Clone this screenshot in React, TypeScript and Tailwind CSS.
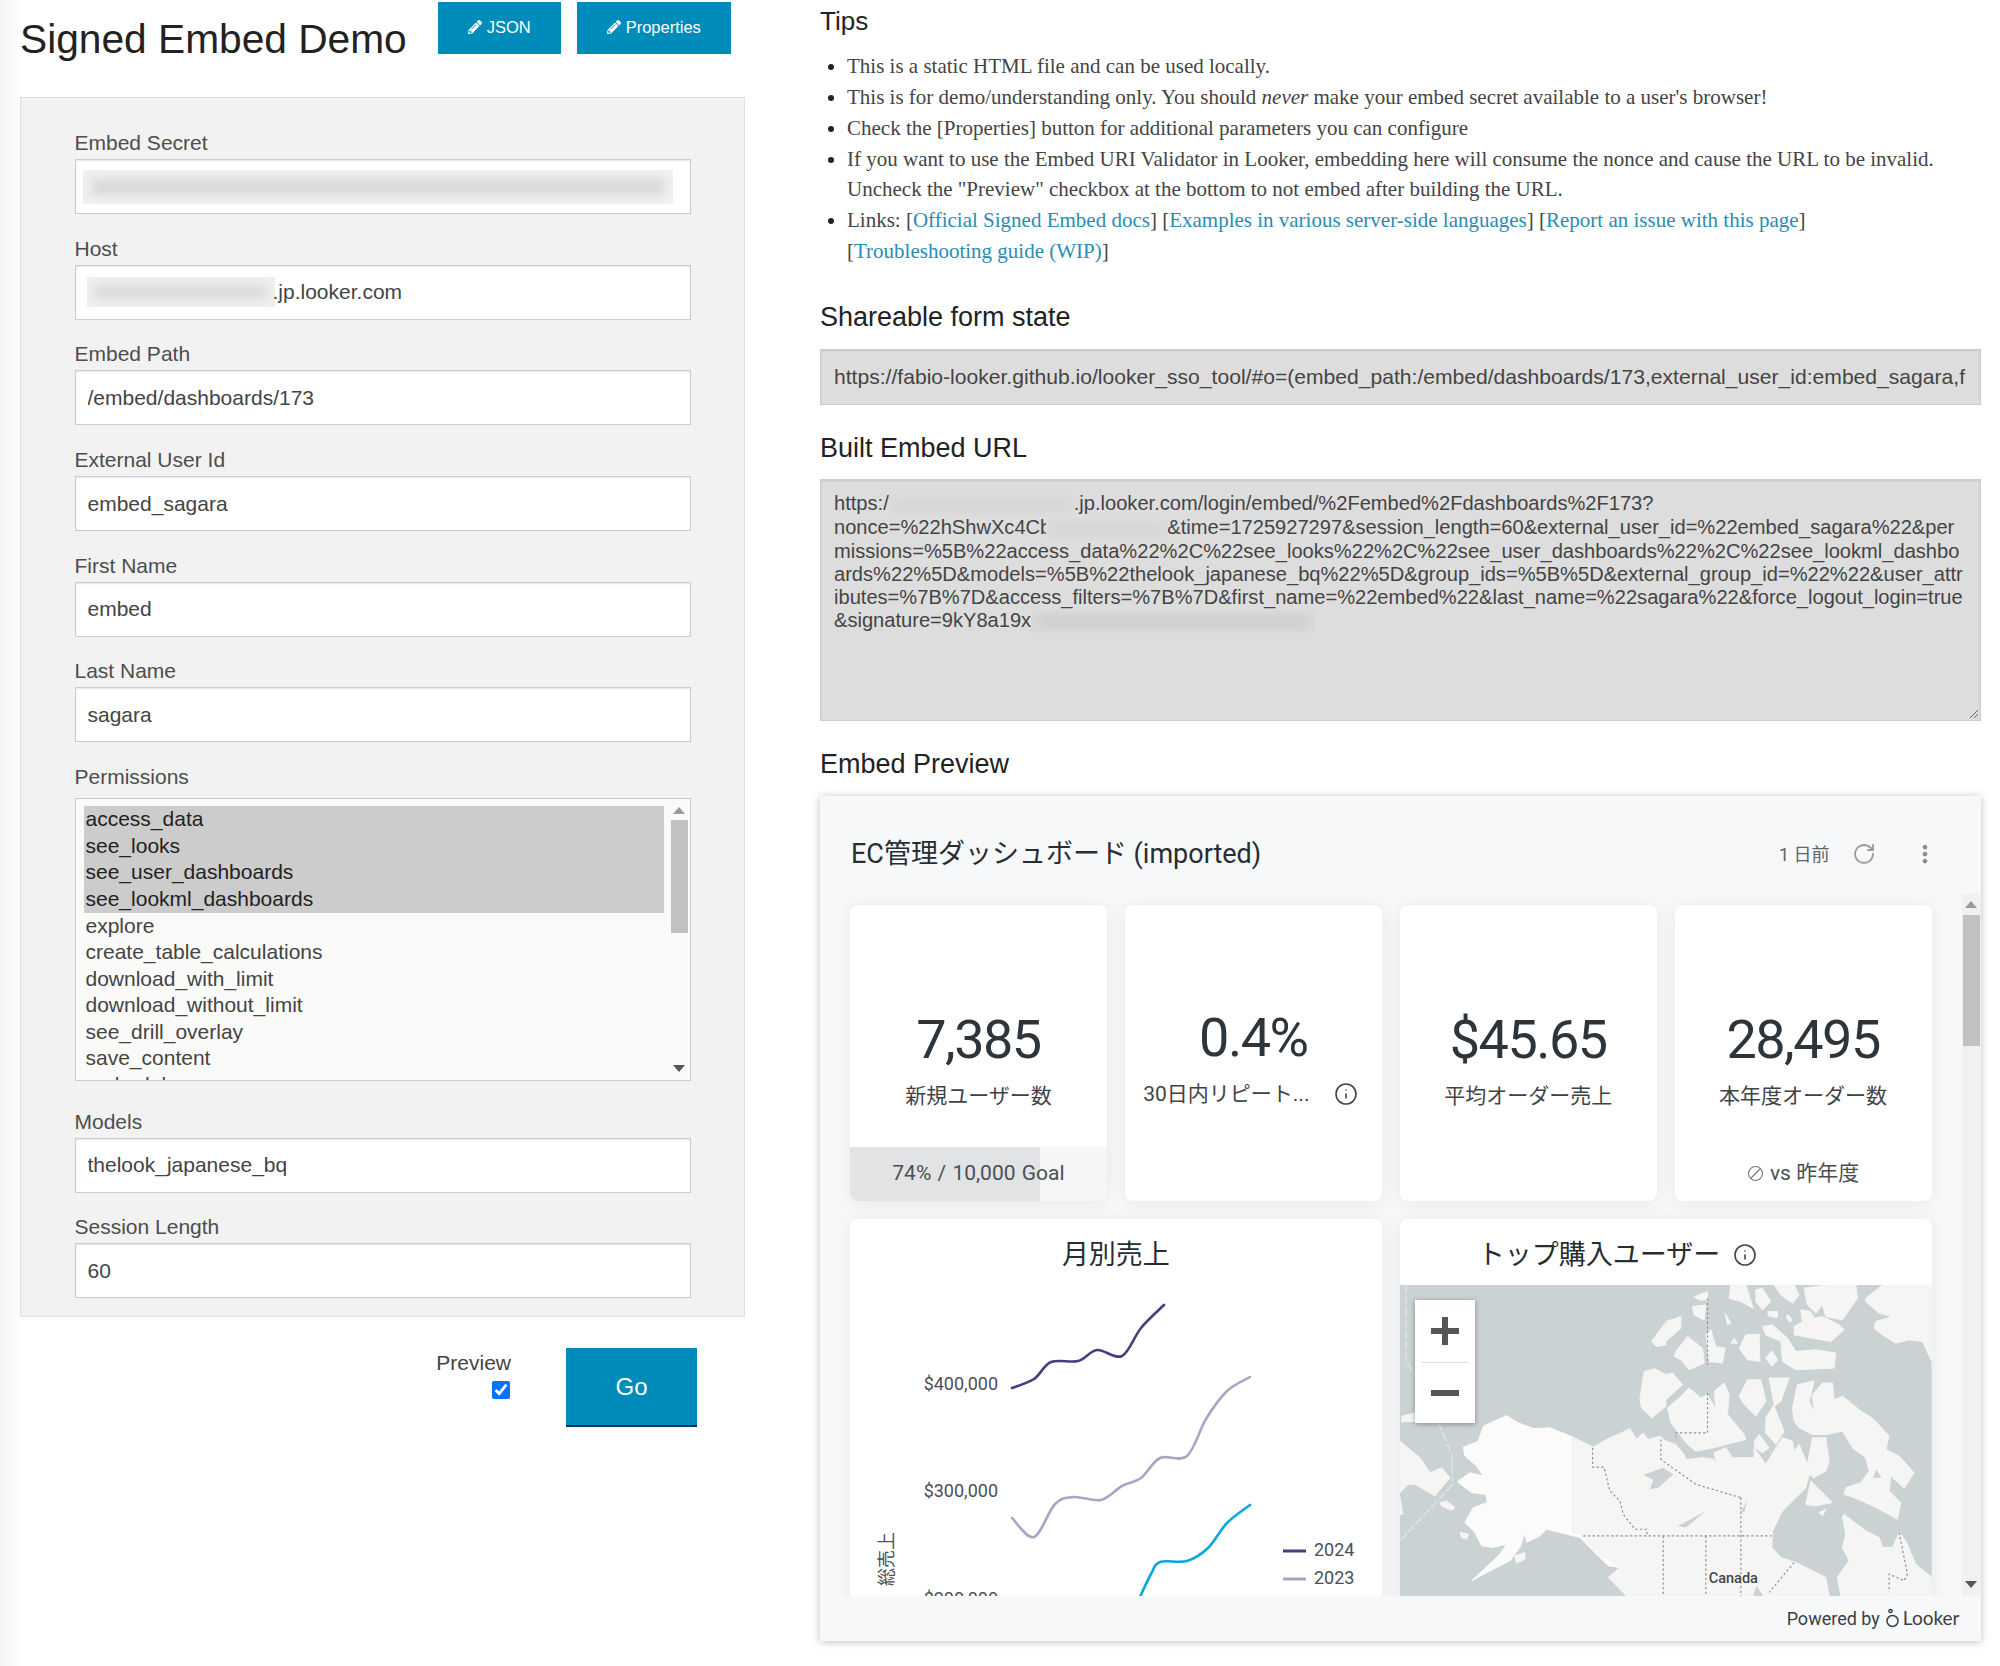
import React from "react";
import { FaPencilAlt } from "react-icons/fa";
import { Info, RotateCw } from "lucide-react";
import { MdMoreVert } from "react-icons/md";

const PERMISSIONS = [
  "access_data",
  "see_looks",
  "see_user_dashboards",
  "see_lookml_dashboards",
  "explore",
  "create_table_calculations",
  "download_with_limit",
  "download_without_limit",
  "see_drill_overlay",
  "save_content",
  "embed_browse_spaces",
];

const LINE_2024: number[][] = [[162, 169], [184, 160], [201, 143], [228, 142], [247, 131], [272, 137], [291, 109], [314, 86]];
const LINE_2023: number[][] = [[162, 299], [184, 318], [205, 285], [224, 278], [251, 281], [272, 267], [291, 259], [310, 239], [337, 237], [356, 200], [377, 172], [400, 158]];
const LINE_2022: number[][] = [[290, 378], [301, 355], [310, 343], [337, 342], [358, 329], [377, 304], [400, 286]];

// catmull-rom through the points, good enough for looker's smoothed lines
const smooth = (pts: number[][]) => {
  let d = `M${pts[0][0]} ${pts[0][1]}`;
  for (let i = 0; i < pts.length - 1; i++) {
    const p0 = pts[Math.max(i - 1, 0)];
    const p1 = pts[i];
    const p2 = pts[i + 1];
    const p3 = pts[Math.min(i + 2, pts.length - 1)];
    const c1x = p1[0] + (p2[0] - p0[0]) / 6;
    const c1y = p1[1] + (p2[1] - p0[1]) / 6;
    const c2x = p2[0] - (p3[0] - p1[0]) / 6;
    const c2y = p2[1] - (p3[1] - p1[1]) / 6;
    d += ` C${c1x} ${c1y} ${c2x} ${c2y} ${p2[0]} ${p2[1]}`;
  }
  return d;
};

const inputBox =
  "h-[55px] w-full border border-[#cccccc] bg-white px-[12px] text-[21px] text-[#444444] shadow-[inset_0_1px_2px_rgba(0,0,0,0.1)] flex items-center outline-none";

const Field: React.FC<{ label: string; value?: string; children?: React.ReactNode }> = ({ label, value, children }) => (
  <div className="mb-[24.7px]">
    <label className="block h-[26px] text-[21px] leading-[20px] text-[#4d4d4d]">{label}</label>
    {children ? (
      <div className={inputBox}>{children}</div>
    ) : (
      <input readOnly value={value} className={inputBox} />
    )}
  </div>
);

const Blur: React.FC<{ w: string; h: string; core: string; bar: string }> = ({ w, h, core, bar }) => (
  <span className={`inline-block overflow-hidden align-middle ${w} ${h} ${core} p-[7px]`}>
    <span className={`block h-full w-full blur-[5px] ${bar}`} />
  </span>
);

const Arrow: React.FC<{ up?: boolean; color?: string }> = ({ up, color = "#555555" }) => (
  <svg width="12" height="7" viewBox="0 0 12 7" className="block">
    <polygon points={up ? "6,0 12,7 0,7" : "0,0 12,0 6,7"} fill={color} />
  </svg>
);

const Tile: React.FC<{ value: string; label: React.ReactNode; foot?: React.ReactNode; valueClass?: string }> = ({
  value,
  label,
  foot,
  valueClass = "mt-[103px]",
}) => (
  <div className="relative flex h-[296px] flex-col items-center overflow-hidden rounded-[8px] bg-white shadow-[0_2px_18px_rgba(0,0,0,0.07)]">
    <div className={`${valueClass} h-[64px] text-[54px] font-normal leading-[64px] tracking-[-1.5px] text-[#2d343a]`}>{value}</div>
    <div className="mt-[10px] flex h-[28px] items-center text-[21px] text-[#3f4347]">{label}</div>
    {foot}
  </div>
);

const MapLand = () => (
  <svg viewBox="0 0 1596 936" className="block h-full w-full blur-[0.6px]" preserveAspectRatio="none">
    <rect width="1596" height="936" fill="#cad2d3" />
    <g fill="#f5f5f4" stroke="#f5f5f4" strokeWidth="3" strokeLinejoin="round">
      {/* russia side */}
      <polygon points="0,470 60,520 90,565 125,550 150,580 105,635 45,600 25,600 0,625" />
      <polygon points="0,640 8,690 0,690" />
      <polygon points="5,395 45,385 45,410 5,412" />
      <polygon points="120,655 140,650 165,670 155,678 125,665" />
      {/* mainland */}
      <polygon points="520,458 580,488 620,465 665,445 690,432 710,465 730,445 745,465 780,455 798,470 828,480 853,510 858,525 908,520 943,525 953,548 943,505 978,490 998,520 1063,520 1063,490 1098,540 1128,490 1148,460 1178,470 1183,500 1198,480 1223,540 1238,460 1278,460 1288,530 1278,560 1243,580 1228,570 1218,610 1178,650 1148,680 1118,740 1116,790 1143,820 1188,835 1238,860 1278,880 1288,936 680,936 625,880 660,850 590,810 550,760 520,745" />
      {/* quebec */}
      <polygon points="1323,936 1313,880 1348,830 1328,790 1338,750 1328,700 1333,690 1398,740 1438,760 1448,790 1478,790 1498,745 1518,770 1548,840 1596,880 1596,936" />
      {/* baffin */}
      <polygon points="1183,410 1178,370 1193,300 1243,288 1228,350 1243,385 1238,330 1268,295 1298,295 1303,345 1328,335 1378,375 1423,405 1468,455 1458,495 1498,515 1543,565 1513,612 1473,575 1468,620 1503,655 1493,705 1448,680 1408,660 1363,640 1333,630 1338,610 1383,595 1408,560 1398,520 1358,490 1328,440 1278,450 1238,450 1198,430" />
      <polygon points="803,370 848,330 868,310 903,340 923,330 948,375 943,320 973,295 988,330 983,390 1033,450 1038,465 978,480 943,490 888,500 863,480 813,415" />
      <polygon points="1018,335 1043,285 1083,285 1098,350 1068,395 1033,360" />
      <polygon points="1108,280 1168,280 1143,350 1123,365 1153,440 1128,480 1098,445 1098,400 1123,360" />
      <polygon points="1063,470 1078,450 1108,490 1088,505 1066,490" />
      <polygon points="828,200 863,155 908,190 913,235 868,255 843,225 823,215" />
      <polygon points="918,150 933,135 948,185 976,190 968,235 928,230" />
      <polygon points="1018,190 1038,150 1078,148 1080,230 1043,225" />
      <polygon points="1098,220 1116,198 1133,225 1116,245" />
      <polygon points="1088,125 1118,120 1163,160 1188,200 1248,195 1308,205 1303,250 1188,255 1148,230 1143,170 1098,150" />
      <polygon points="1183,125 1208,110 1203,75 1233,80 1243,100 1268,95 1318,120 1333,135 1293,170 1183,150" />
      <polygon points="1213,10 1278,0 1368,0 1373,40 1328,105 1278,95 1268,60 1248,85 1223,60" />
      <polygon points="1123,0 1183,0 1198,30 1178,55 1143,30" />
      <polygon points="1068,15 1088,10 1113,50 1088,75 1068,50" />
      <polygon points="993,0 1038,0 1060,70 1023,50 988,40" />
      <polygon points="883,35 923,20 923,45 898,45" />
      <polygon points="878,65 918,60 913,105 883,90" />
      <polygon points="1103,80 1133,80 1133,98 1108,95" />
      <polygon points="1163,88 1178,105 1170,112 1160,98" />
      <polygon points="976,85 993,115 983,120" />
      <polygon points="798,110 843,95 843,130 798,170" />
      <polygon points="1003,160 1013,175 993,175" />
      <polygon points="1398,40 1448,0 1596,0 1596,230 1568,170 1528,165 1488,175 1448,150 1423,130 1428,110 1478,95 1438,85 1398,50" />
      <polygon points="1218,660 1233,590 1298,655 1268,660 1243,665" />
      <polygon points="1258,685 1278,675 1268,695" />
      {/* banks */}
      <polygon points="733,260 765,252 798,270 818,265 848,300 798,345 798,365 755,400 725,370 720,345" />
      <polygon points="755,170 795,115 798,180 770,185" />
      <polygon points="345,815 375,805 375,825 350,838" />
      <polygon points="180,745 205,750 200,765 185,760" />
    </g>
    {/* alaska */}
    <polygon
      fill="#fbfbfa"
      stroke="#fbfbfa"
      strokeWidth="3"
      strokeLinejoin="round"
      points="190,488 235,470 250,425 320,393 355,415 400,432 450,430 520,458 520,745 550,760 590,810 660,850 625,845 570,790 540,760 440,735 420,755 380,775 375,745 360,790 330,830 290,850 215,890 300,810 320,780 280,790 245,785 225,745 195,715 220,670 262,655 258,630 215,625 172,592 210,565 250,575 230,545 195,515"
    />
    <g fill="#cad2d3">
      <ellipse cx="1356" cy="525" rx="14" ry="17" />
      <polygon points="1420,580 1430,555 1445,580" />
      <polygon points="730,572 790,550 820,570 775,610 750,615 760,585" />
      <polygon points="833,725 863,710 918,680 888,705 858,730" />
      <polygon points="1023,680 1043,650 1033,685" />
      <polygon points="1060,936 1070,905 1090,936" />
    </g>
    <path d="M520 458V745" stroke="#e6e7e6" strokeWidth="3" fill="none" />
    <g fill="none" stroke="#8d8f8f" strokeWidth="3.5" strokeDasharray="7 7">
      <path d="M578 490V548H612L630 620L660 650L670 690L705 735H740L742 755" />
      <path d="M550 755H1116" />
      <path d="M790 755V936M918 755V936M1023 640V936" />
      <path d="M783 465V525L888 600L1023 640" />
      <path d="M923 40V240M923 325V445H828V458" />
      <path d="M1183 835L1108 925" />
      <path d="M1498 745L1523 870L1513 890L1468 870V925" />
    </g>
    <g fill="none" stroke="#e2e8e8" strokeWidth="4" strokeDasharray="26 8">
      <path d="M18 0V225L42 270" />
      <path d="M115 415L155 510L158 590" />
      <path d="M158 600L0 770" />
    </g>
  </svg>
);

export default function App() {
  return (
    <div className="flex h-[1666px] w-[2000px] overflow-hidden bg-[linear-gradient(to_right,#f3f3f3,#ffffff_22px)] font-['Liberation_Sans',Arial,sans-serif] text-[#222222]">
      {/* left column */}
      <div className="ml-[20px] w-[725px] shrink-0">
        <div className="flex h-[97px] items-start">
          <h1 className="mt-[15px] text-[40.7px] leading-[48px] text-[#222222]">Signed Embed Demo</h1>
          <button className="ml-[31px] mt-[2px] flex h-[52px] w-[123px] items-center justify-center gap-[5px] bg-[#008cba] pb-[2px] text-[16.5px] text-white">
            <FaPencilAlt size={14} /> JSON
          </button>
          <button className="ml-[16px] mt-[2px] flex h-[52px] w-[154px] items-center justify-center gap-[5px] bg-[#008cba] pb-[2px] text-[16.5px] text-white">
            <FaPencilAlt size={14} /> Properties
          </button>
        </div>

        <div className="h-[1220px] border border-[#dfdfdf] bg-[#f2f2f2] pl-[53.5px] pr-[53px] pt-[35px]">
          <Field label="Embed Secret">
            <div className="-ml-[5px] -mr-[5px] h-[34px] w-full bg-[#f1f1f1] p-[8px]">
              <div className="h-full w-full bg-[#d9dad9] blur-[5px]" />
            </div>
          </Field>
          <Field label="Host">
            <div className="-ml-[1px] h-[30px] w-[188px] shrink-0 bg-[#f0f0f0] p-[8px]">
              <div className="h-full w-full bg-[#dadada] blur-[5px]" />
            </div>
            <span className="-ml-[2px]">.jp.looker.com</span>
          </Field>
          <Field label="Embed Path" value="/embed/dashboards/173" />
          <Field label="External User Id" value="embed_sagara" />
          <Field label="First Name" value="embed" />
          <Field label="Last Name" value="sagara" />

          <div className="mb-[30.5px]">
            <label className="block h-[31px] text-[21px] leading-[20px] text-[#4d4d4d]">Permissions</label>
            <div className="relative flex h-[283px] w-full overflow-hidden border border-[#cccccc] bg-[#fafaf9] pl-[8px] pt-[7px] text-[21px] leading-[26.6px] text-[#444444]">
              <ul className="w-[580px]">
                {PERMISSIONS.map((p, i) => (
                  <li key={p} className={i < 4 ? "bg-[#cccccc] pl-[2px] text-[#222222]" : "pl-[2px]"}>
                    {p}
                  </li>
                ))}
              </ul>
              <div className="absolute right-[2px] top-0 flex h-full w-[18px] flex-col items-center">
                <div className="mt-[8px] mb-[6px]">
                  <Arrow up color="#9a9a9a" />
                </div>
                <div className="h-[113px] w-[17px] bg-[#c1c1c1]" />
                <div className="mt-auto mb-[8px]">
                  <Arrow />
                </div>
              </div>
            </div>
          </div>

          <Field label="Models" value="thelook_japanese_bq" />
          <Field label="Session Length" value="60" />
        </div>

        <div className="flex items-start">
          <div className="ml-[415px] mt-[31px] flex w-[76px] flex-col items-end">
            <label className="text-[21px] leading-[30px] text-[#444444]">Preview</label>
            <input type="checkbox" readOnly checked className="mr-[1px] mt-[3px] h-[18px] w-[18px]" />
          </div>
          <button className="ml-[55px] mt-[31px] h-[79px] w-[131px] border-b-2 border-[#00305f] bg-[#008cba] text-[24px] text-white">
            Go
          </button>
        </div>
      </div>

      {/* right column */}
      <div className="ml-[75px] w-[1160.5px] shrink-0">
        <h3 className="mt-[4px] h-[34px] text-[26px] leading-[34px] text-[#222222]">Tips</h3>
        <ul className="ml-[27px] mt-[13px] list-disc pl-0 font-['Liberation_Serif',serif] text-[21px] leading-[30.85px] text-[#444444] marker:text-[#222222]">
          <li>This is a static HTML file and can be used locally.</li>
          <li>
            This is for demo/understanding only. You should <i>never</i> make your embed secret available to a user's browser!
          </li>
          <li>Check the [Properties] button for additional parameters you can configure</li>
          <li>
            If you want to use the Embed URI Validator in Looker, embedding here will consume the nonce and cause the URL to be invalid.
            <br />
            Uncheck the "Preview" checkbox at the bottom to not embed after building the URL.
          </li>
          <li>
            Links: [<a className="text-[#2a8cb4]">Official Signed Embed docs</a>] [
            <a className="text-[#2a8cb4]">Examples in various server-side languages</a>] [
            <a className="text-[#2a8cb4]">Report an issue with this page</a>]
            <br />[<a className="text-[#2a8cb4]">Troubleshooting guide (WIP)</a>]
          </li>
        </ul>

        <h3 className="mt-[33.5px] h-[34px] text-[27px] leading-[34px] text-[#222222]">Shareable form state</h3>
        <div className="mt-[15px] flex h-[56px] items-center overflow-hidden whitespace-nowrap border border-[#cccccc] bg-[#dddddd] px-[13px] pb-[2px] text-[21.1px] text-[#444444] shadow-[inset_0_1px_2px_rgba(0,0,0,0.1)]">
          https://fabio-looker.github.io/looker_sso_tool/#o=(embed_path:/embed/dashboards/173,external_user_id:embed_sagara,f
        </div>

        <h3 className="mt-[26px] h-[34px] text-[27px] leading-[34px] text-[#222222]">Built Embed URL</h3>
        <div className="relative mt-[14px] h-[242px] overflow-hidden whitespace-nowrap border border-[#cccccc] bg-[#dddddd] px-[13px] pt-[12px] text-[20.1px] leading-[23.1px] text-[#444444] shadow-[inset_0_1px_2px_rgba(0,0,0,0.1)]">
          <div>
            https:/
            <Blur w="w-[185px]" h="h-[22px]" core="bg-[#dcdcdc]" bar="bg-[#d3d3d3]" />
            .jp.looker.com/login/embed/%2Fembed%2Fdashboards%2F173?
          </div>
          <div>
            nonce=%22hShwXc4Cb
            <Blur w="-ml-[5px] w-[121px]" h="h-[22px]" core="bg-[#dcdcdc]" bar="bg-[#d3d3d3]" />
            &amp;time=1725927297&amp;session_length=60&amp;external_user_id=%22embed_sagara%22&amp;per
          </div>
          <div>missions=%5B%22access_data%22%2C%22see_looks%22%2C%22see_user_dashboards%22%2C%22see_lookml_dashbo</div>
          <div>ards%22%5D&amp;models=%5B%22thelook_japanese_bq%22%5D&amp;group_ids=%5B%5D&amp;external_group_id=%22%22&amp;user_attr</div>
          <div>ibutes=%7B%7D&amp;access_filters=%7B%7D&amp;first_name=%22embed%22&amp;last_name=%22sagara%22&amp;force_logout_login=true</div>
          <div>
            &amp;signature=9kY8a19x
            <Blur w="w-[284px]" h="h-[23px]" core="bg-[#dadada]" bar="bg-[#cbcbcb]" />
          </div>
          <svg width="10" height="10" viewBox="0 0 10 10" className="absolute bottom-[1px] right-[1px]">
            <path d="M1 9L9 1M5 9L9 5" stroke="#666666" strokeWidth="1" />
          </svg>
        </div>

        <h3 className="mt-[26px] h-[34px] text-[27px] leading-[34px] text-[#222222]">Embed Preview</h3>

        {/* dashboard */}
        <div className="mt-[15px] flex h-[845px] flex-col overflow-hidden bg-[#f6f8fa] font-['Roboto','Noto_Sans_CJK_JP',sans-serif] shadow-[0_1px_8px_rgba(0,0,0,0.25)]">
          <div className="flex h-[98px] shrink-0 items-center pl-[31px] pt-[18px]">
            <div className="text-[27px] text-[#262d33]">EC管理ダッシュボード (imported)</div>
            <div className="ml-auto text-[18px] text-[#5f6368]">1 日前</div>
            <RotateCw size={24} strokeWidth={1.8} className="ml-[22px] text-[#9a9a9a]" />
            <MdMoreVert size={28} className="ml-[35px] mr-[42px] text-[#8c8c8c]" />
          </div>

          <div className="flex min-h-0 flex-1">
            <div className="w-[1142px] overflow-hidden pl-[30px] pt-[11px]">
              <div className="grid w-[1081.5px] grid-cols-4 gap-x-[18px] gap-y-[18px]">
                <Tile
                  value="7,385"
                  label="新規ユーザー数"
                  foot={
                    <div className="absolute bottom-0 left-0 flex h-[54px] w-full items-center justify-center bg-[linear-gradient(to_right,#e1e3e5_74%,#f5f6f7_74%)] pb-[2px] text-[21px] text-[#4b4f54] [word-spacing:1px]">
                      74% / 10,000 Goal
                    </div>
                  }
                />
                <Tile
                  value="0.4%"
                  valueClass="mt-[101px]"
                  label={
                    <span className="flex items-center pr-[5px]">
                      30日内リピート...
                      <Info size={24} strokeWidth={1.6} className="ml-[25px] text-[#444444]" />
                    </span>
                  }
                />
                <Tile value="$45.65" label="平均オーダー売上" />
                <Tile
                  value="28,495"
                  label="本年度オーダー数"
                  foot={
                    <div className="absolute bottom-0 left-0 flex h-[54px] w-full items-center justify-center gap-[6px] pb-[2px] text-[21px] text-[#4b4f54]">
                      <svg width="17" height="17" viewBox="0 0 17 17" fill="none" stroke="#777777" strokeWidth="1.1">
                        <circle cx="8.5" cy="8.5" r="7" />
                        <path d="M3.5 13.5L13.5 3.5" />
                      </svg>
                      vs 昨年度
                    </div>
                  }
                />

                <div className="relative col-span-2 h-[420px] rounded-[8px] bg-white shadow-[0_2px_18px_rgba(0,0,0,0.07)]">
                  <div className="pt-[21px] text-center text-[27px] leading-[30px] text-[#262d33]">月別売上</div>
                  <svg viewBox="0 0 532 420" className="absolute left-0 top-0 h-[420px] w-[532px]">
                    <path d={smooth(LINE_2024)} fill="none" stroke="#4b3c7f" strokeWidth="2.6" strokeLinecap="round" />
                    <path d={smooth(LINE_2023)} fill="none" stroke="#aaa5c2" strokeWidth="2.6" strokeLinecap="round" />
                    <path d={smooth(LINE_2022)} fill="none" stroke="#0ba7dc" strokeWidth="2.6" strokeLinecap="round" />
                    <g fontSize="18" fill="#4b4f54" fontFamily="Roboto, 'Noto Sans CJK JP', sans-serif">
                      <text x="148" y="171" textAnchor="end">$400,000</text>
                      <text x="148" y="278" textAnchor="end">$300,000</text>
                      <text x="148" y="386" textAnchor="end">$200,000</text>
                      <text x="464" y="337">2024</text>
                      <text x="464" y="365">2023</text>
                      <text transform="translate(38 340) rotate(-90)" textAnchor="middle" dominantBaseline="middle">総売上</text>
                    </g>
                    <path d="M433 332H456" stroke="#4b3c7f" strokeWidth="3" />
                    <path d="M433 360H456" stroke="#aaa5c2" strokeWidth="3" />
                  </svg>
                </div>

                <div className="col-span-2 h-[420px] overflow-hidden rounded-[8px] bg-white shadow-[0_2px_18px_rgba(0,0,0,0.07)]">
                  <div className="flex h-[66px] items-center pl-[78px] pt-[6px] text-[27px] text-[#262d33]">
                    <span>トップ購入ユーザー</span>
                    <Info size={24} strokeWidth={1.6} className="ml-[13px] text-[#444444]" />
                  </div>
                  <div className="relative h-[311px] w-full">
                    <MapLand />
                    <span className="absolute left-[309px] top-[284px] text-[14.5px] font-medium leading-[20px] text-[#444444] [text-shadow:0_0_3px_#ffffff]">
                      Canada
                    </span>
                    <div className="absolute left-[15px] top-[15px] flex h-[123px] w-[60px] flex-col items-center bg-white shadow-[0_1px_5px_rgba(0,0,0,0.35)]">
                      <div className="flex h-[62px] items-center justify-center">
                        <svg width="28" height="28" viewBox="0 0 28 28">
                          <path d="M0 14H28M14 0V28" stroke="#555555" strokeWidth="6" />
                        </svg>
                      </div>
                      <div className="h-px w-[46px] bg-[#dddddd]" />
                      <div className="flex h-[60px] items-center justify-center">
                        <div className="h-[6px] w-[28px] bg-[#555555]" />
                      </div>
                    </div>
                  </div>
                </div>
              </div>
            </div>
            <div className="flex w-[18.5px] flex-col items-center bg-[#f1f1f1]">
              <div className="mt-[7px] mb-[7px]">
                <Arrow up color="#9a9a9a" />
              </div>
              <div className="h-[131px] w-[17px] bg-[#c1c1c1]" />
              <div className="mt-auto mb-[8px]">
                <Arrow />
              </div>
            </div>
          </div>

          <div className="flex h-[45px] shrink-0 items-center justify-end pb-[1px] pr-[21px] text-[18px] text-[#3c4043]">
            Powered by
            <svg width="13" height="20" viewBox="0 0 13 20" fill="none" stroke="#3c4043" strokeWidth="1.5" className="ml-[6px]">
              <circle cx="6.5" cy="13" r="5.5" />
              <circle cx="4.5" cy="3" r="1.6" />
            </svg>
            <span className="ml-[4px] font-['Lato',sans-serif] text-[19px]">Looker</span>
          </div>
        </div>
      </div>
    </div>
  );
}
